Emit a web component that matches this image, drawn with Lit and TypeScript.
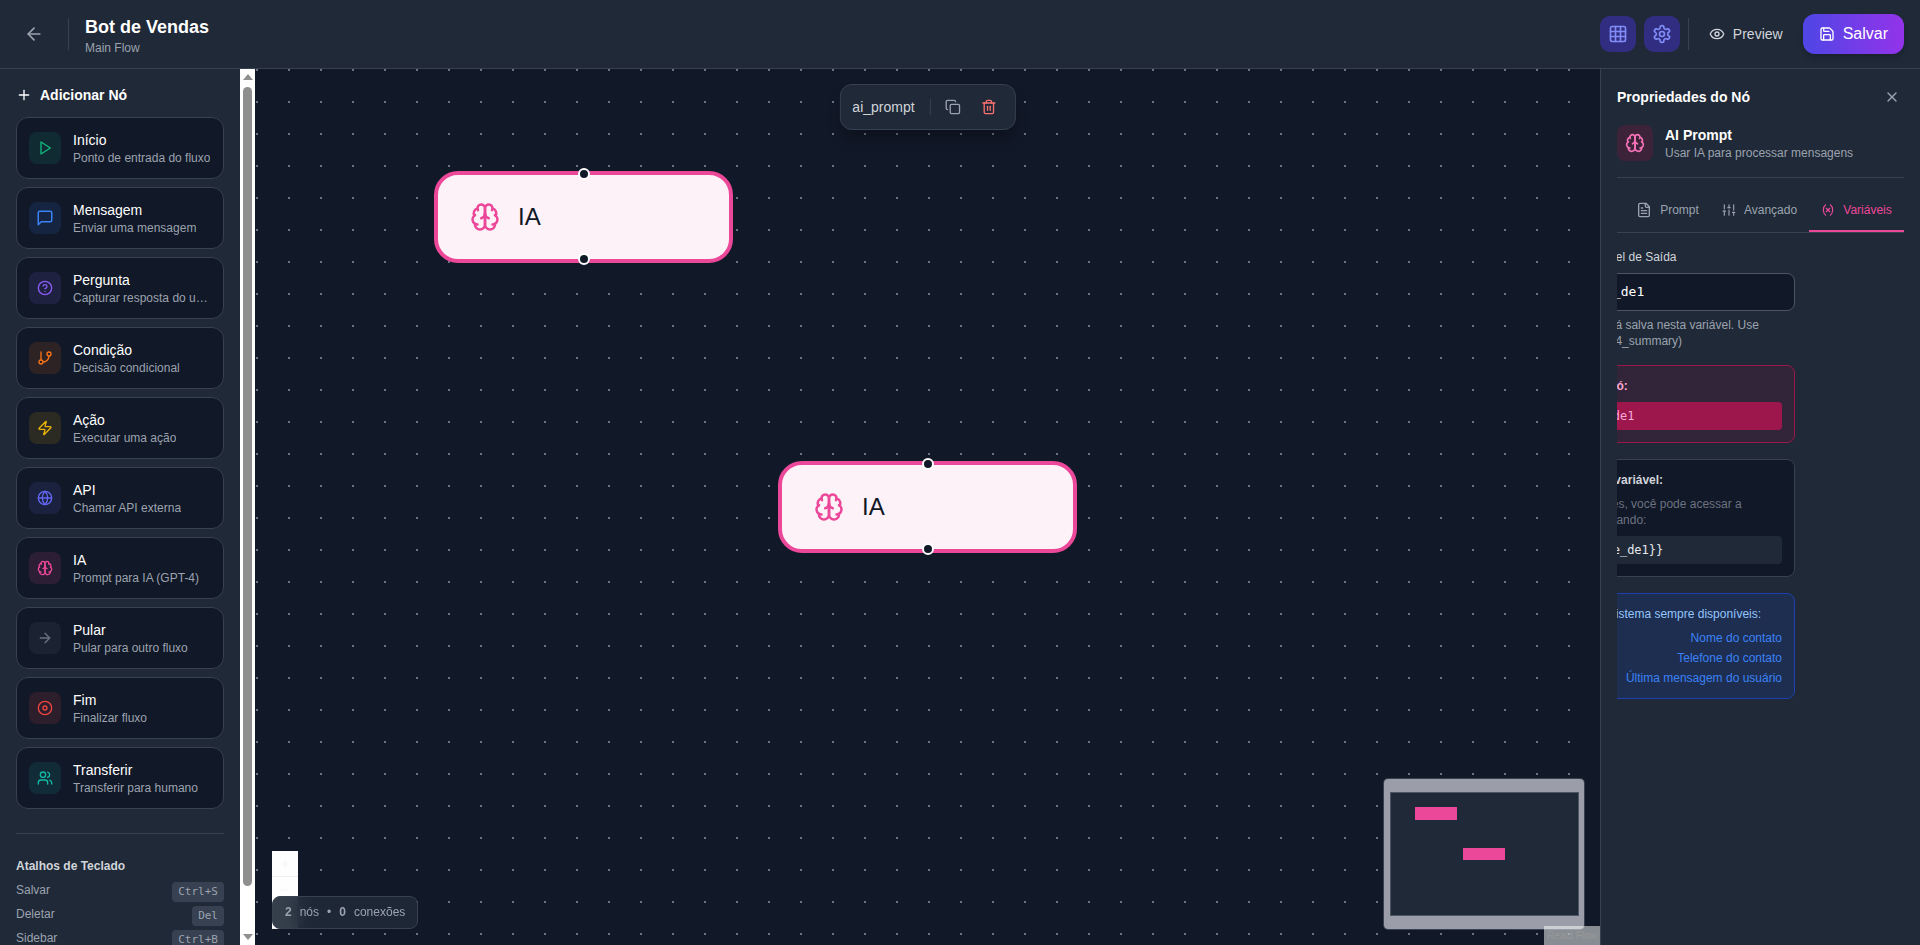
import { LitElement, css, html, svg } from 'lit';
import { customElement } from 'lit/decorators.js';

const icons: Record<string, unknown> = {
  arrowLeft: svg`<path d="m12 19-7-7 7-7"/><path d="M19 12H5"/>`,
  arrowRight: svg`<path d="M5 12h14"/><path d="m12 5 7 7-7 7"/>`,
  plus: svg`<path d="M5 12h14"/><path d="M12 5v14"/>`,
  minus: svg`<path d="M5 12h14"/>`,
  play: svg`<polygon points="6 3 20 12 6 21 6 3"/>`,
  message: svg`<path d="M21 15a2 2 0 0 1-2 2H7l-4 4V5a2 2 0 0 1 2-2h14a2 2 0 0 1 2 2z"/>`,
  help: svg`<circle cx="12" cy="12" r="10"/><path d="M9.09 9a3 3 0 0 1 5.83 1c0 2-3 3-3 3"/><path d="M12 17h.01"/>`,
  branch: svg`<line x1="6" x2="6" y1="3" y2="15"/><circle cx="18" cy="6" r="3"/><circle cx="6" cy="18" r="3"/><path d="M18 9a9 9 0 0 1-9 9"/>`,
  zap: svg`<path d="M4 14a1 1 0 0 1-.78-1.63l9.9-10.2a.5.5 0 0 1 .86.46l-1.92 6.02A1 1 0 0 0 13 10h7a1 1 0 0 1 .78 1.63l-9.9 10.2a.5.5 0 0 1-.86-.46l1.92-6.02A1 1 0 0 0 11 14z"/>`,
  globe: svg`<circle cx="12" cy="12" r="10"/><path d="M12 2a14.5 14.5 0 0 0 0 20 14.5 14.5 0 0 0 0-20"/><path d="M2 12h20"/>`,
  brain: svg`<path d="M12 5a3 3 0 1 0-5.997.125 4 4 0 0 0-2.526 5.77 4 4 0 0 0 .556 6.588A4 4 0 1 0 12 18Z"/><path d="M12 5a3 3 0 1 1 5.997.125 4 4 0 0 1 2.526 5.77 4 4 0 0 1-.556 6.588A4 4 0 1 1 12 18Z"/><path d="M15 13a4.5 4.5 0 0 1-3-4 4.5 4.5 0 0 1-3 4"/><path d="M17.599 6.5a3 3 0 0 0 .399-1.375"/><path d="M6.003 5.125A3 3 0 0 0 6.401 6.5"/><path d="M3.477 10.896a4 4 0 0 1 .585-.396"/><path d="M19.938 10.5a4 4 0 0 1 .585.396"/><path d="M6 18a4 4 0 0 1-1.967-.516"/><path d="M19.967 17.484A4 4 0 0 1 18 18"/>`,
  target: svg`<circle cx="12" cy="12" r="10"/><circle cx="12" cy="12" r="3"/>`,
  users: svg`<path d="M16 21v-2a4 4 0 0 0-4-4H6a4 4 0 0 0-4 4v2"/><circle cx="9" cy="7" r="4"/><path d="M22 21v-2a4 4 0 0 0-3-3.87"/><path d="M16 3.13a4 4 0 0 1 0 7.75"/>`,
  grid: svg`<rect width="18" height="18" x="3" y="3" rx="2"/><path d="M3 9h18"/><path d="M3 15h18"/><path d="M9 3v18"/><path d="M15 3v18"/>`,
  settings: svg`<path d="M12.22 2h-.44a2 2 0 0 0-2 2v.18a2 2 0 0 1-1 1.73l-.43.25a2 2 0 0 1-2 0l-.15-.08a2 2 0 0 0-2.73.73l-.22.38a2 2 0 0 0 .73 2.73l.15.1a2 2 0 0 1 1 1.72v.51a2 2 0 0 1-1 1.74l-.15.09a2 2 0 0 0-.73 2.73l.22.38a2 2 0 0 0 2.73.73l.15-.08a2 2 0 0 1 2 0l.43.25a2 2 0 0 1 1 1.73V20a2 2 0 0 0 2 2h.44a2 2 0 0 0 2-2v-.18a2 2 0 0 1 1-1.73l.43-.25a2 2 0 0 1 2 0l.15.08a2 2 0 0 0 2.73-.73l.22-.39a2 2 0 0 0-.73-2.73l-.15-.08a2 2 0 0 1-1-1.74v-.5a2 2 0 0 1 1-1.74l.15-.09a2 2 0 0 0 .73-2.73l-.22-.38a2 2 0 0 0-2.73-.73l-.15.08a2 2 0 0 1-2 0l-.43-.25a2 2 0 0 1-1-1.73V4a2 2 0 0 0-2-2z"/><circle cx="12" cy="12" r="3"/>`,
  eye: svg`<path d="M2.062 12.348a1 1 0 0 1 0-.696 10.75 10.75 0 0 1 19.876 0 1 1 0 0 1 0 .696 10.75 10.75 0 0 1-19.876 0"/><circle cx="12" cy="12" r="3"/>`,
  save: svg`<path d="M15.2 3a2 2 0 0 1 1.4.6l3.8 3.8a2 2 0 0 1 .6 1.4V19a2 2 0 0 1-2 2H5a2 2 0 0 1-2-2V5a2 2 0 0 1 2-2z"/><path d="M17 21v-7a1 1 0 0 0-1-1H8a1 1 0 0 0-1 1v7"/><path d="M7 3v4a1 1 0 0 0 1 1h7"/>`,
  x: svg`<path d="M18 6 6 18"/><path d="m6 6 12 12"/>`,
  file: svg`<path d="M15 2H6a2 2 0 0 0-2 2v16a2 2 0 0 0 2 2h12a2 2 0 0 0 2-2V7Z"/><path d="M14 2v4a2 2 0 0 0 2 2h4"/><path d="M10 9H8"/><path d="M16 13H8"/><path d="M16 17H8"/>`,
  sliders: svg`<line x1="4" x2="4" y1="21" y2="14"/><line x1="4" x2="4" y1="10" y2="3"/><line x1="12" x2="12" y1="21" y2="12"/><line x1="12" x2="12" y1="8" y2="3"/><line x1="20" x2="20" y1="21" y2="16"/><line x1="20" x2="20" y1="12" y2="3"/><line x1="2" x2="6" y1="14" y2="14"/><line x1="10" x2="14" y1="8" y2="8"/><line x1="18" x2="22" y1="16" y2="16"/>`,
  variable: svg`<path d="M8 21s-4-3-4-9 4-9 4-9"/><path d="M16 3s4 3 4 9-4 9-4 9"/><line x1="15" x2="9" y1="9" y2="15"/><line x1="9" x2="15" y1="9" y2="15"/>`,
  copy: svg`<rect width="14" height="14" x="8" y="8" rx="2"/><path d="M4 16c-1.1 0-2-.9-2-2V4c0-1.1.9-2 2-2h10c1.1 0 2 .9 2 2"/>`,
  trash: svg`<path d="M3 6h18"/><path d="M19 6v14c0 1-1 2-2 2H7c-1 0-2-1-2-2V6"/><path d="M8 6V4c0-1 1-2 2-2h4c1 0 2 1 2 2v2"/><line x1="10" x2="10" y1="11" y2="17"/><line x1="14" x2="14" y1="11" y2="17"/>`,
};

const icon = (name: string, size = 16) => html`<svg
  width=${size}
  height=${size}
  viewBox="0 0 24 24"
  fill="none"
  stroke="currentColor"
  stroke-width="2"
  stroke-linecap="round"
  stroke-linejoin="round"
>${icons[name]}</svg>`;

const palette = [
  { icon: 'play', color: '#10b981', title: 'Início', sub: 'Ponto de entrada do fluxo' },
  { icon: 'message', color: '#3b82f6', title: 'Mensagem', sub: 'Enviar uma mensagem', size: 18 },
  { icon: 'help', color: '#8b5cf6', title: 'Pergunta', sub: 'Capturar resposta do usuário' },
  { icon: 'branch', color: '#f97316', title: 'Condição', sub: 'Decisão condicional' },
  { icon: 'zap', color: '#eab308', title: 'Ação', sub: 'Executar uma ação' },
  { icon: 'globe', color: '#6366f1', title: 'API', sub: 'Chamar API externa' },
  { icon: 'brain', color: '#ec4899', title: 'IA', sub: 'Prompt para IA (GPT-4)' },
  { icon: 'arrowRight', color: '#6b7280', title: 'Pular', sub: 'Pular para outro fluxo' },
  { icon: 'target', color: '#ef4444', title: 'Fim', sub: 'Finalizar fluxo' },
  { icon: 'users', color: '#14b8a6', title: 'Transferir', sub: 'Transferir para humano' },
];

const shortcuts = [
  ['Salvar', 'Ctrl+S'],
  ['Deletar', 'Del'],
  ['Sidebar', 'Ctrl+B'],
];

const nodes = [
  { x: 179, y: 102 },
  { x: 523, y: 392 },
];

const systemVars = [
  ['{{nome}}', 'Nome do contato'],
  ['{{telefone}}', 'Telefone do contato'],
  ['{{mensagem}}', 'Última mensagem do usuário'],
];

@customElement('app-root')
export class AppRoot extends LitElement {
  static styles = css`
    :host {
      display: block;
      height: 100vh;
      font-family: 'Liberation Sans', Arial, sans-serif;
      color: #fff;
    }

    svg {
      display: block;
      flex: none;
    }

    button {
      font: inherit;
      border: 0;
      background: none;
      color: inherit;
      padding: 0;
      display: flex;
      align-items: center;
      justify-content: center;
    }

    .app {
      height: 100%;
      display: flex;
      flex-direction: column;
      background: #111827;
      overflow: hidden;
    }

    /* top bar */
    .topbar {
      height: 68px;
      flex: none;
      display: flex;
      align-items: center;
      padding: 0 16px;
      gap: 16px;
      background: #1f2937;
      border-bottom: 1px solid #374151;
    }

    .back {
      width: 36px;
      height: 36px;
      color: #9ca3af;
    }

    .vline {
      width: 1px;
      height: 32px;
      background: #374151;
    }

    .flow-name {
      flex: 1;
    }

    .flow-name h1 {
      margin: 0;
      font-size: 18px;
      line-height: 28px;
      font-weight: 700;
    }

    .flow-name p {
      margin: -1px 0 0;
      font-size: 12px;
      line-height: 16px;
      color: #9ca3af;
    }

    .actions {
      display: flex;
      align-items: center;
      gap: 8px;
    }

    .tool {
      width: 36px;
      height: 36px;
      border-radius: 10px;
      background: #312e81;
      color: #818cf8;
    }

    .preview {
      gap: 8px;
      height: 36px;
      padding: 0 12px;
      font-size: 14px;
      color: #d1d5db;
    }

    .save {
      gap: 8px;
      height: 40px;
      padding: 0 16px;
      font-size: 16px;
      color: #fff;
      border-radius: 12px;
      background: linear-gradient(to right, #4f46e5, #9333ea);
      box-shadow: 0 4px 6px -1px rgba(0, 0, 0, 0.2);
    }

    .body {
      flex: 1;
      min-height: 0;
      display: flex;
    }

    /* left palette */
    .side {
      width: 255px;
      flex: none;
      display: flex;
      min-height: 0;
    }

    .sidebar {
      width: 240px;
      box-sizing: border-box;
      overflow: hidden;
      padding: 16px;
      background: #1f2937;
    }

    .scrollbar {
      width: 15px;
      box-sizing: border-box;
      padding: 5px 0;
      display: flex;
      flex-direction: column;
      align-items: center;
      background: #fff;
    }

    .arrow {
      width: 0;
      height: 0;
      flex: none;
      border-left: 5px solid transparent;
      border-right: 5px solid transparent;
    }

    .arrow.up {
      border-bottom: 6px solid #8f8f8f;
    }

    .arrow.down {
      margin-top: 48px;
      border-top: 6px solid #8f8f8f;
    }

    .thumb {
      width: 9px;
      height: 799px;
      flex: none;
      margin-top: 7px;
      border-radius: 5px;
      background: #8f8f8f;
    }

    .sidebar h2 {
      margin: 0 0 12px;
      display: flex;
      align-items: center;
      gap: 8px;
      font-size: 14px;
      line-height: 20px;
      font-weight: 700;
    }

    .cards {
      display: flex;
      flex-direction: column;
      gap: 8px;
    }

    .card {
      height: 62px;
      box-sizing: border-box;
      display: flex;
      align-items: center;
      gap: 12px;
      padding: 0 12px;
      background: #111827;
      border: 1px solid #374151;
      border-radius: 12px;
    }

    .card-icon {
      width: 32px;
      height: 32px;
      flex: none;
      border-radius: 8px;
      display: flex;
      align-items: center;
      justify-content: center;
    }

    .card-text {
      min-width: 0;
    }

    .card-title {
      font-size: 14px;
      line-height: 20px;
    }

    .card-sub {
      font-size: 12px;
      line-height: 16px;
      color: #9ca3af;
      white-space: nowrap;
      overflow: hidden;
      text-overflow: ellipsis;
    }

    .keys {
      margin-top: 24px;
      padding-top: 24px;
      border-top: 1px solid #374151;
    }

    .keys h3 {
      margin: 0 0 8px;
      font-size: 12px;
      line-height: 16px;
      font-weight: 700;
      color: #d1d5db;
    }

    .key-row {
      display: flex;
      justify-content: space-between;
      margin-bottom: 4px;
      font-size: 12px;
      line-height: 16px;
      color: #9ca3af;
    }

    kbd {
      font-family: 'DejaVu Sans Mono', monospace;
      font-size: 11px;
      line-height: 16px;
      padding: 2px 6px;
      border-radius: 4px;
      background: #374151;
    }

    /* canvas */
    .canvas {
      flex: 1;
      min-width: 0;
      position: relative;
      overflow: hidden;
      background-color: #111827;
      background-image: radial-gradient(circle at 1px 1px, #6b7280 1px, transparent 1px);
      background-size: 32px 32px;
      background-position: 1px 0;
    }

    .node-bar {
      position: absolute;
      top: 15px;
      left: 50%;
      transform: translateX(-50%);
      display: flex;
      align-items: center;
      gap: 8px;
      padding: 8px 12px;
      background: #1f2937;
      border: 1px solid #374151;
      border-radius: 12px;
      box-shadow: 0 10px 15px -3px rgba(0, 0, 0, 0.3);
    }

    .node-bar span {
      font-size: 14px;
      color: #d1d5db;
      margin-right: 7px;
    }

    .node-bar i {
      width: 1px;
      height: 16px;
      background: #374151;
    }

    .node-bar button {
      width: 28px;
      height: 28px;
      color: #9ca3af;
    }

    .node-bar button.danger {
      color: #f87171;
    }

    .node {
      position: absolute;
      width: 299px;
      height: 92px;
      box-sizing: border-box;
      display: flex;
      align-items: center;
      gap: 18px;
      padding-left: 32px;
      background: #fdf2f8;
      border: 4px solid #ec4899;
      border-radius: 24px;
      color: #ec4899;
    }

    .node span {
      font-size: 24px;
      color: #111827;
    }

    .handle {
      position: absolute;
      left: 50%;
      width: 12px;
      height: 12px;
      box-sizing: border-box;
      margin-left: -6px;
      border-radius: 50%;
      background: #111827;
      border: 2px solid #fff;
    }

    .handle.top {
      top: -7px;
    }

    .handle.bottom {
      bottom: -6px;
    }

    .zoom-controls {
      position: absolute;
      left: 17px;
      bottom: 16px;
      width: 26px;
      background: #fefefe;
    }

    .zoom-controls div {
      height: 26px;
      box-sizing: border-box;
      border-bottom: 1px solid #eee;
      display: flex;
      align-items: center;
      justify-content: center;
      color: #f4f4f4;
    }

    .stats {
      position: absolute;
      left: 17px;
      bottom: 16px;
      display: flex;
      gap: 8px;
      padding: 8px 12px;
      font-size: 12px;
      line-height: 15px;
      color: #9ca3af;
      background: rgba(31, 41, 55, 0.9);
      backdrop-filter: blur(8px);
      border: 1px solid #374151;
      border-radius: 8px;
    }

    .stats b {
      font-weight: 700;
    }

    .minimap {
      position: absolute;
      right: 16px;
      bottom: 16px;
      border-radius: 4px;
      box-shadow: 0 0 0 1px #374151;
    }

    .credit {
      position: absolute;
      right: 0;
      bottom: 0;
      padding: 2px 3px;
      font-size: 10px;
      line-height: 15px;
      color: #999;
      background: rgba(255, 255, 255, 0.5);
    }

    /* right panel */
    .panel {
      width: 320px;
      box-sizing: border-box;
      flex: none;
      padding: 16px;
      background: #1f2937;
      border-left: 1px solid #374151;
      overflow: hidden;
    }

    .panel-head {
      height: 24px;
      display: flex;
      align-items: center;
      justify-content: space-between;
      font-size: 14px;
      font-weight: 700;
      margin-bottom: 16px;
    }

    .panel-head button {
      color: #9ca3af;
      margin-right: 4px;
    }

    .node-info {
      display: flex;
      align-items: center;
      gap: 12px;
      padding-bottom: 16px;
      border-bottom: 1px solid #374151;
    }

    .node-info .card-icon {
      width: 36px;
      height: 36px;
      color: #f472b6;
      background: rgba(131, 24, 67, 0.3);
    }

    .node-info b {
      display: block;
      font-size: 14px;
      line-height: 20px;
    }

    .node-info small {
      display: block;
      font-size: 12px;
      line-height: 16px;
      color: #9ca3af;
    }

    .tabs {
      margin-top: 16px;
      display: grid;
      grid-template-columns: 101px 91px 95px;
      border-bottom: 1px solid #374151;
    }

    .tab {
      height: 38px;
      box-sizing: border-box;
      gap: 8px;
      padding-bottom: 4px;
      font-size: 12px;
      color: #9ca3af;
      border-bottom: 2px solid transparent;
    }

    .tab.mid {
      padding-right: 8px;
    }

    .tab.active {
      color: #ec4899;
      border-bottom-color: #ec4899;
    }

    .pane-clip {
      overflow: hidden;
      padding-top: 16px;
    }

    .pane {
      width: 287px;
      margin-left: -109px;
    }

    .pane label {
      display: block;
      font-size: 12px;
      line-height: 16px;
      color: #d1d5db;
      margin-bottom: 8px;
    }

    .field {
      height: 38px;
      box-sizing: border-box;
      padding: 8px 10px;
      font-family: 'DejaVu Sans Mono', monospace;
      font-size: 13px;
      line-height: 20px;
      background: #111827;
      border: 1px solid #4b5563;
      border-radius: 8px;
    }

    .hint {
      margin: 6px 0 16px;
      font-size: 12px;
      line-height: 16px;
      color: #9ca3af;
    }

    .box {
      padding: 12px;
      margin-bottom: 16px;
      border: 1px solid;
      border-radius: 8px;
      font-size: 12px;
      line-height: 16px;
    }

    .box h4 {
      margin: 0 0 8px;
      font-size: 12px;
      line-height: 16px;
    }

    .box code {
      display: block;
      height: 28px;
      box-sizing: border-box;
      padding: 6px 5px;
      font-family: 'DejaVu Sans Mono', monospace;
      font-size: 12px;
      line-height: 16px;
      border-radius: 4px;
    }

    .box p {
      margin: 0 0 8px;
      color: #6b7280;
    }

    .box.pink {
      background: rgba(131, 24, 67, 0.2);
      border-color: #9d174d;
    }

    .box.pink h4 {
      color: #f9a8d4;
      text-indent: 2px;
    }

    .box.pink code {
      background: #9d174d;
      color: #f9a8d4;
    }

    .box.dark {
      background: #111827;
      border-color: #374151;
    }

    .box.dark h4 {
      color: #d1d5db;
    }

    .box.dark code {
      background: #1f2937;
      color: #e5e7eb;
    }

    .box.blue {
      background: rgba(30, 58, 138, 0.3);
      border-color: #1e40af;
      color: #93c5fd;
    }

    .box.blue h4 {
      font-weight: 400;
    }

    .sys-row {
      display: flex;
      justify-content: space-between;
      margin-top: 4px;
      color: #3b82f6;
    }
  `;

  renderTopbar() {
    return html`
      <header class="topbar">
        <button class="back">${icon('arrowLeft', 20)}</button>
        <div class="vline"></div>
        <div class="flow-name">
          <h1>Bot de Vendas</h1>
          <p>Main Flow</p>
        </div>
        <div class="actions">
          <button class="tool">${icon('grid', 20)}</button>
          <button class="tool">${icon('settings', 20)}</button>
          <div class="vline"></div>
          <button class="preview">${icon('eye')}Preview</button>
          <button class="save">${icon('save')}Salvar</button>
        </div>
      </header>
    `;
  }

  renderSidebar() {
    return html`
      <div class="side">
        <aside class="sidebar">
          <h2>${icon('plus')}Adicionar Nó</h2>
          <div class="cards">
            ${palette.map(
              (p) => html`
                <div class="card">
                  <div class="card-icon" style="color:${p.color};background:${p.color}20">
                    ${icon(p.icon, p.size ?? 16)}
                  </div>
                  <div class="card-text">
                    <div class="card-title">${p.title}</div>
                    <div class="card-sub">${p.sub}</div>
                  </div>
                </div>
              `,
            )}
          </div>
          <div class="keys">
            <h3>Atalhos de Teclado</h3>
            ${shortcuts.map(
              ([label, key]) => html`<div class="key-row"><span>${label}</span><kbd>${key}</kbd></div>`,
            )}
          </div>
        </aside>
        <div class="scrollbar">
          <div class="arrow up"></div>
          <div class="thumb"></div>
          <div class="arrow down"></div>
        </div>
      </div>
    `;
  }

  renderCanvas() {
    return html`
      <main class="canvas">
        <div class="node-bar">
          <span>ai_prompt</span>
          <i></i>
          <button>${icon('copy')}</button>
          <button class="danger">${icon('trash')}</button>
        </div>
        ${nodes.map(
          (n) => html`
            <div class="node" style="left:${n.x}px;top:${n.y}px">
              <div class="handle top"></div>
              ${icon('brain', 30)}
              <span>IA</span>
              <div class="handle bottom"></div>
            </div>
          `,
        )}
        <div class="zoom-controls">
          <div>${icon('plus', 12)}</div>
          <div>${icon('minus', 12)}</div>
          <div></div>
        </div>
        <div class="stats">
          <b>2</b><span>nós</span><span>•</span><b>0</b><span>conexões</span>
        </div>
        <svg class="minimap" width="200" height="150" viewBox="0 0 200 150">
          <rect width="200" height="150" fill="#9b9ea8" />
          <rect x="6.5" y="13.5" width="188" height="123" fill="#1f2937" stroke="#4b5563" />
          <rect x="31" y="28" width="42" height="13" fill="#ec4899" />
          <rect x="79" y="69" width="42" height="12" fill="#ec4899" />
        </svg>
        <div class="credit">React Flow</div>
      </main>
    `;
  }

  renderPanel() {
    return html`
      <aside class="panel">
        <div class="panel-head">
          <span>Propriedades do Nó</span>
          <button>${icon('x')}</button>
        </div>
        <div class="node-info">
          <div class="card-icon">${icon('brain', 20)}</div>
          <div>
            <b>AI Prompt</b>
            <small>Usar IA para processar mensagens</small>
          </div>
        </div>
        <div class="tabs">
          <button class="tab">${icon('file')}Prompt</button>
          <button class="tab mid">${icon('sliders', 14)}Avançado</button>
          <button class="tab active">${icon('variable', 14)}Variáveis</button>
        </div>
        <div class="pane-clip">
          <div class="pane">
            <label>Nome da sua Variável de Saída</label>
            <div class="field">variavel_ies_de1</div>
            <p class="hint">A resposta da IA será salva nesta variável. Use snake_case (ex: gpt4_summary)</p>
            <div class="box pink">
              <h4>Variável desse nó:</h4>
              <code>resultado_e_de1</code>
            </div>
            <div class="box dark">
              <h4>Como usar esta variável:</h4>
              <p>Em nós posteriores, você pode acessar a resposta do nó usando:</p>
              <code>{{resultado_e_de1}}</code>
            </div>
            <div class="box blue">
              <h4>Ver variáveis do sistema sempre disponíveis:</h4>
              ${systemVars.map(
                ([name, label]) => html`<div class="sys-row"><span>${name}</span><span>${label}</span></div>`,
              )}
            </div>
          </div>
        </div>
      </aside>
    `;
  }

  render() {
    return html`
      <div class="app">
        ${this.renderTopbar()}
        <div class="body">${this.renderSidebar()} ${this.renderCanvas()} ${this.renderPanel()}</div>
      </div>
    `;
  }
}
